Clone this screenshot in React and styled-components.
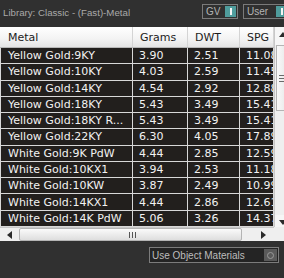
import React from "react";
import styled, { createGlobalStyle } from "styled-components";

const rows = [
  ["Yellow Gold:9KY", "3.90", "2.51", "11.08"],
  ["Yellow Gold:10KY", "4.03", "2.59", "11.45"],
  ["Yellow Gold:14KY", "4.54", "2.92", "12.88"],
  ["Yellow Gold:18KY", "5.43", "3.49", "15.41"],
  ["Yellow Gold:18KY R...", "5.43", "3.49", "15.41"],
  ["Yellow Gold:22KY", "6.30", "4.05", "17.89"],
  ["White Gold:9K PdW", "4.44", "2.85", "12.59"],
  ["White Gold:10KX1", "3.94", "2.53", "11.18"],
  ["White Gold:10KW", "3.87", "2.49", "10.99"],
  ["White Gold:14KX1", "4.44", "2.86", "12.61"],
  ["White Gold:14K PdW", "5.06", "3.26", "14.37"],
];

const GlobalStyle = createGlobalStyle`
  html, body {
    margin: 0;
    background: #303030;
    overflow: hidden;
  }
`;

//Small triangle used by the scroll buttons
function Arrow({ dir }) {
  const pts = {
    up: "0,5 4,0 8,5",
    down: "0,0 8,0 4,5",
    left: "5,0 5,8 0,4",
    right: "0,0 0,8 5,4",
  }[dir];
  const vertical = dir === "up" || dir === "down";
  return (
    <svg width={vertical ? 8 : 5} height={vertical ? 5 : 8}>
      <polygon points={pts} fill="#2a2a2a" />
    </svg>
  );
}

function Toggle({ label, width }) {
  return (
    <StyledToggle $width={width}>
      <span>{label}</span>
      <Knob />
    </StyledToggle>
  );
}

export default function App() {
  return (
    <Panel>
      <GlobalStyle />
      <TopBar>
        <Title>Library: Classic - (Fast)-Metal</Title>
        <Toggles>
          <Toggle label="GV" width={36} />
          <Toggle label="User" width={46} />
        </Toggles>
      </TopBar>

      <TableFrame>
        <HeaderRow>
          <HeadCell>Metal</HeadCell>
          <HeadCell>Grams</HeadCell>
          <HeadCell>DWT</HeadCell>
          <HeadCell>SPG</HeadCell>
        </HeaderRow>

        <VScroll>
          <ScrollButton>
            <Arrow dir="up" />
          </ScrollButton>
          <VThumb>
            <VGrip />
          </VThumb>
          <Track />
          <ScrollButton $bottom>
            <Arrow dir="down" />
          </ScrollButton>
        </VScroll>

        <Body>
          {rows.map((r) => (
            <Row key={r[0]}>
              {r.map((v, i) => (
                <Cell key={i} $first={i === 0}>
                  {v}
                </Cell>
              ))}
            </Row>
          ))}
        </Body>

        <HScroll>
          <HButton>
            <Arrow dir="left" />
          </HButton>
          <HThumb>
            <HGrip>
              <i />
              <i />
              <i />
            </HGrip>
          </HThumb>
          <HButton>
            <Arrow dir="right" />
          </HButton>
        </HScroll>
        <Corner />
      </TableFrame>

      <Footer>
        <CheckBox>
          <span>Use Object Materials</span>
          <Radio>
            <i />
          </Radio>
        </CheckBox>
      </Footer>
    </Panel>
  );
}

//Styled components
const Panel = styled.div`
  width: 284px;
  height: 278px;
  overflow: hidden;
  display: flex;
  flex-direction: column;
  background: #303030;
`;

const TopBar = styled.div`
  height: 27px;
  display: flex;
  justify-content: space-between;
  align-items: flex-start;
  padding-left: 3px;
`;

const Title = styled.div`
  margin-top: 7px;
  font-family: "Liberation Sans", Arial, sans-serif;
  font-size: 9.7px;
  color: #a9a9a9;
  white-space: nowrap;
`;

const Toggles = styled.div`
  display: flex;
  gap: 5px;
  margin-top: 4px;
  margin-right: -5px;
`;

const StyledToggle = styled.div`
  width: ${(p) => p.$width}px;
  height: 15px;
  box-sizing: border-box;
  border: 1px solid #7a7a7a;
  display: flex;
  align-items: center;
  justify-content: space-between;
  padding: 0 1px 0 3px;
  font-family: "Liberation Sans", Arial, sans-serif;
  font-size: 10px;
  color: #b4b4b4;
`;

const Knob = styled.div`
  width: 11px;
  height: 11px;
  background: #4f9c9c;
  display: flex;
  align-items: center;
  justify-content: center;
  &::after {
    content: "";
    width: 2px;
    height: 7px;
    background: #f4f4f4;
  }
`;

const TableFrame = styled.div`
  display: grid;
  grid-template-columns: 274px 16px;
  grid-template-rows: 21px 179px 14px;
`;

const HeaderRow = styled.div`
  grid-column: 1;
  grid-row: 1;
  display: grid;
  grid-template-columns: 133px 55px 52px 34px;
  background: linear-gradient(#ffffff, #f3f3f3 60%, #e4e4e4);
  border-bottom: 1px solid #b8b8b8;
  box-sizing: border-box;
`;

const HeadCell = styled.div`
  display: flex;
  align-items: center;
  border-right: 1px solid #d4d4d4;
  font-family: "DejaVu Sans", Verdana, sans-serif;
  font-size: 11px;
  color: #1c1c1c;
  overflow: hidden;
  white-space: nowrap;
  &:first-child {
    padding-left: 8px;
  }
  &:not(:first-child) {
    padding-left: 7px;
  }
`;

const VScroll = styled.div`
  grid-column: 2;
  grid-row: 1 / span 2;
  display: flex;
  flex-direction: column;
  background: #efefef;
  border-left: 1px solid #c8c8c8;
`;

const ScrollButton = styled.div`
  height: ${(p) => (p.$bottom ? "12px" : "18px")};
  display: flex;
  justify-content: center;
  align-items: ${(p) => (p.$bottom ? "flex-end" : "flex-start")};
  padding: ${(p) => (p.$bottom ? "0 0 2px" : "5px 0 0")};
  box-sizing: border-box;
  background: #f6f6f6;
`;

const VThumb = styled.div`
  height: 64px;
  margin: 0 1px;
  background: linear-gradient(90deg, #f9f9f9, #e6e6e6);
  border: 1px solid #b4b4b4;
  display: flex;
  align-items: center;
  justify-content: center;
`;

const VGrip = styled.div`
  width: 7px;
  height: 5px;
  border-top: 1px solid #6a6a6a;
  border-bottom: 1px solid #6a6a6a;
  position: relative;
  &::after {
    content: "";
    position: absolute;
    left: 0;
    right: 0;
    top: 2px;
    border-top: 1px solid #6a6a6a;
  }
`;

const Track = styled.div`
  flex: 1;
`;

const Body = styled.div`
  grid-column: 1;
  grid-row: 2;
  display: grid;
  grid-auto-rows: 16.27px;
  background: #221f1d;
  overflow: hidden;
`;

const Row = styled.div`
  display: grid;
  grid-template-columns: 133px 55px 52px 34px;
`;

const Cell = styled.div`
  box-sizing: border-box;
  display: flex;
  align-items: center;
  padding-left: ${(p) => (p.$first ? "7px" : "6px")};
  border-left: ${(p) => (p.$first ? "1px solid #d8d8d8" : "none")};
  border-right: 1px solid #d8d8d8;
  border-bottom: 1px solid #d8d8d8;
  font-family: "DejaVu Sans", Verdana, sans-serif;
  font-size: 11px;
  color: #f2f2f2;
  white-space: nowrap;
  overflow: hidden;
`;

const HScroll = styled.div`
  grid-column: 1;
  grid-row: 3;
  display: flex;
  align-items: center;
  background: #efefef;
  border-top: 1px solid #c8c8c8;
`;

const HButton = styled.div`
  width: 19px;
  display: flex;
  justify-content: center;
  &:last-child {
    width: auto;
    flex: 1;
    justify-content: flex-end;
    padding-right: 8px;
  }
`;

const HThumb = styled.div`
  width: 221px;
  height: 11px;
  background: linear-gradient(#fafafa, #dedede);
  border: 1px solid #b4b4b4;
  border-radius: 2px;
  display: flex;
  align-items: center;
  justify-content: center;
`;

const HGrip = styled.div`
  display: flex;
  gap: 2px;
  margin-left: 4px;
  i {
    width: 1px;
    height: 6px;
    background: #555;
  }
`;

const Corner = styled.div`
  grid-column: 2;
  grid-row: 3;
  background: #efefef;
`;

const Footer = styled.div`
  display: flex;
  justify-content: flex-end;
  padding: 6px 5px 0 0;
`;

const CheckBox = styled.div`
  width: 130px;
  height: 16px;
  box-sizing: border-box;
  border: 1px solid #7c7c7c;
  background: #242424;
  display: flex;
  align-items: center;
  justify-content: space-between;
  padding: 0 1px 0 2px;
  font-family: "Liberation Sans", Arial, sans-serif;
  font-size: 10px;
  color: #bdbdbd;
`;

const Radio = styled.div`
  width: 13px;
  height: 12px;
  background: #5a5a5a;
  display: flex;
  align-items: center;
  justify-content: center;
  i {
    width: 5px;
    height: 5px;
    border: 1px solid #9a9a9a;
    border-radius: 50%;
  }
`;
